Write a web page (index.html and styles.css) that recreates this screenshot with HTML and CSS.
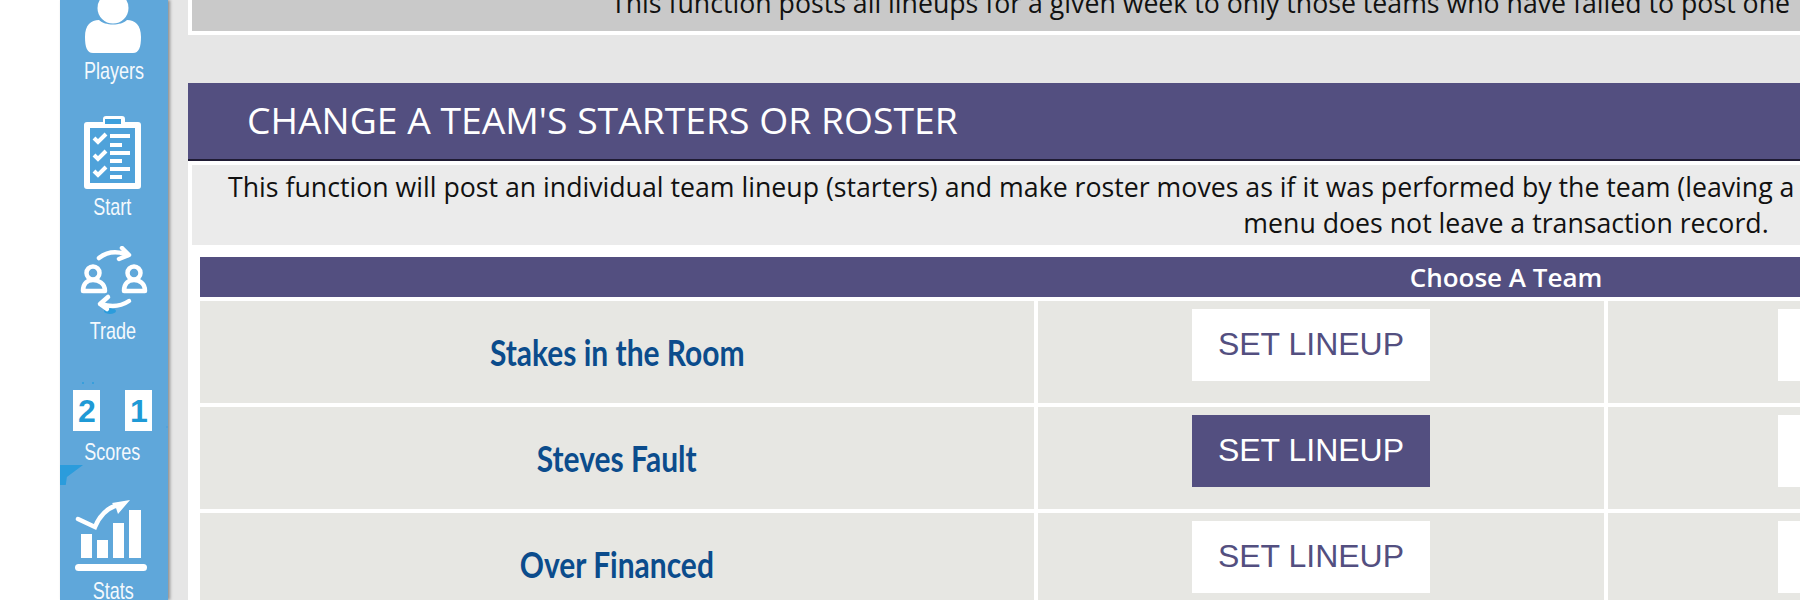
FILE: index.html
```html
<!DOCTYPE html>
<html lang="en">

<head>
    <meta charset="UTF-8">
    <meta name="viewport" content="width=device-width, initial-scale=1.0">
    <title>Commissioner Functions</title>
    <link rel="stylesheet" href="styles.css">
</head>

<body>
    <div class="layout">
        <nav class="sidebar">
            <a class="nav-item nav-players" href="#">
                <svg class="nav-icon" width="108" height="62" viewBox="0 0 108 62">
                    <circle cx="53" cy="15" r="15.5" fill="#fff" />
                    <path d="M25 44 C25 32 31 27 39 27 C45 33 61 33 67 27 C75 27 81 32 81 44 C81 54 79 60 73 60 L33 60 C27 60 25 54 25 44 Z" fill="#fff" />
                </svg>
                <span>Players</span>
            </a>
            <a class="nav-item nav-start" href="#">
                <svg class="nav-icon" width="108" height="73" viewBox="0 0 108 73">
                    <path d="M43 3 Q43 0 46 0 L62 0 Q65 0 65 3 L65 6 L78 6 Q81 6 81 9 L81 70 Q81 73 78 73 L27 73 Q24 73 24 70 L24 9 Q24 6 27 6 L43 6 Z" fill="#fff" />
                    <rect x="30" y="12" width="45" height="55" fill="#4fa2da" />
                    <rect x="45" y="3" width="16" height="5" fill="#3ea0dc" />
                    <g fill="none" stroke="#fff" stroke-width="4">
                        <path d="M34 22 L38 26 L46 18" />
                        <path d="M34 39 L38 43 L46 35" />
                        <path d="M34 55 L38 59 L46 51" />
                    </g>
                    <g fill="#fff">
                        <rect x="50" y="18" width="20" height="4" />
                        <rect x="50" y="27" width="12" height="4" />
                        <rect x="50" y="35" width="20" height="4" />
                        <rect x="50" y="43" width="12" height="4" />
                        <rect x="50" y="51" width="20" height="4" />
                        <rect x="50" y="59" width="12" height="4" />
                    </g>
                </svg>
                <span>Start</span>
            </a>
            <a class="nav-item nav-trade" href="#">
                <svg class="nav-icon" width="108" height="70" viewBox="0 0 108 70">
                    <ellipse cx="50" cy="65" rx="6" ry="3" fill="#2b9cdc" />
                    <g fill="none" stroke="#fff" stroke-width="4.5" stroke-linecap="round" stroke-linejoin="round">
                        <path d="M39 12 C48 5 58 5 68 9" />
                        <path d="M62 2 L69 9 L59 13" />
                        <path d="M69 55 C60 61 50 61 41 58" />
                        <path d="M48 51 L40 58 L47 63" />
                        <circle cx="33" cy="27" r="6.5" />
                        <path d="M23 45 C23 37 28 34 33 34 C38 34 45 37 45 45 Z" />
                        <circle cx="74" cy="27" r="6.5" />
                        <path d="M64 45 C64 37 69 34 74 34 C79 34 85 37 85 45 Z" />
                    </g>
                </svg>
                <span>Trade</span>
            </a>
            <a class="nav-item nav-scores" href="#">
                <svg class="nav-icon" width="108" height="49" viewBox="0 -8 108 49">
                    <circle cx="23" cy="-7" r="1" fill="#2b9cdc" />
                    <circle cx="33" cy="-7" r="1" fill="#2b9cdc" />
                    <circle cx="107" cy="37" r="1" fill="#4fa2da" />
                    <rect x="13" y="0" width="27" height="41" fill="#fff" />
                    <rect x="65" y="0" width="27" height="41" fill="#fff" />
                    <text class="score-digit" x="27" y="32">2</text>
                    <text class="score-digit" x="79" y="32">1</text>
                </svg>
                <span>Scores</span>
            </a>
            <a class="nav-item nav-stats" href="#">
                <svg class="nav-icon" width="108" height="72" viewBox="0 0 108 72">
                    <g fill="#fff">
                        <rect x="21" y="35" width="11" height="24" />
                        <rect x="37" y="41" width="11" height="18" />
                        <rect x="53" y="24" width="11" height="35" />
                        <rect x="69" y="11" width="12" height="48" />
                        <rect x="15" y="65" width="72" height="7" rx="3.5" />
                        <path d="M52 4 L70 1 L58 15 L56 9 Z" />
                    </g>
                    <path d="M18 20 L35 28 C39 18 47 9 58 6" fill="none" stroke="#fff" stroke-width="4.5" stroke-linecap="round" />
                </svg>
                <span>Stats</span>
            </a>
            <span class="sidebar-chip"></span>
        </nav>

        <main class="content">
            <section class="panel-top">
                <p class="panel-top-text">This function posts all lineups for a given week to only those teams who have failed to post one</p>
            </section>

            <section class="panel">
                <h2 class="panel-title">CHANGE A TEAM'S STARTERS OR ROSTER</h2>
                <div class="panel-desc">
                    <p class="desc-first">This function will post an individual team lineup (starters) and make roster moves as if it was performed by the team (leaving a</p>
                    <p class="desc-last">menu does not leave a transaction record.</p>
                </div>

                <div class="teams">
                    <div class="teams-head">Choose A Team</div>

                    <div class="team-row">
                        <div class="team-name"><span>Stakes in the Room</span></div>
                        <div class="team-cell"><a class="action-button" href="#">SET LINEUP</a></div>
                        <div class="team-cell team-cell-last"><a class="action-button" href="#"></a></div>
                    </div>
                    <div class="team-row">
                        <div class="team-name"><span>Steves Fault</span></div>
                        <div class="team-cell"><a class="action-button action-button-hover" href="#">SET LINEUP</a></div>
                        <div class="team-cell team-cell-last"><a class="action-button" href="#"></a></div>
                    </div>
                    <div class="team-row">
                        <div class="team-name"><span>Over Financed</span></div>
                        <div class="team-cell"><a class="action-button" href="#">SET LINEUP</a></div>
                        <div class="team-cell team-cell-last"><a class="action-button" href="#"></a></div>
                    </div>
                </div>
            </section>
        </main>
    </div>
</body>

</html>
```

FILE: styles.css
```css
* {
    box-sizing: border-box;
    margin: 0;
    padding: 0;
}

html,
body {
    height: 100%;
    overflow: hidden;
}

body {
    font-family: "Open Sans", "Liberation Sans", sans-serif;
    background-color: #fff;
}

a {
    text-decoration: none;
}

.layout {
    display: flex;
    width: 2824px;
    height: 600px;
    padding-left: 60px;
}

/* sidebar */
.sidebar {
    position: relative;
    flex: 0 0 108px;
    height: 600px;
    overflow: hidden;
    display: flex;
    flex-direction: column;
    align-items: center;
    background-color: #5fa7da;
    box-shadow: 2px 0 3px #8f8f8f;
    z-index: 1;
}

.nav-item {
    display: flex;
    flex-direction: column;
    align-items: center;
    flex-shrink: 0;
    color: #f4f9fd;
    font-family: "Liberation Sans", sans-serif;
    font-size: 24px;
    line-height: 24px;
}

.nav-item span {
    display: block;
    transform: scaleX(0.75);
}

.nav-icon {
    display: block;
    flex-shrink: 0;
}

.nav-players {
    margin-top: -7px;
}

.nav-players span {
    margin-top: 4px;
}

.nav-start {
    margin-top: 33px;
}

.nav-start span {
    margin: 6px 4px 0 0;
}

.nav-trade {
    margin-top: 27px;
}

.nav-trade span {
    margin: 3px 2px 0 0;
}

.nav-scores {
    margin-top: 39px;
}

.nav-scores span {
    margin: 9px 4px 0 0;
}

.nav-stats {
    margin-top: 35px;
}

.nav-stats span {
    margin: 8px 2px 0 0;
}

.score-digit {
    font-family: "Liberation Sans", sans-serif;
    font-size: 32px;
    font-weight: 700;
    fill: #1f9ad6;
    text-anchor: middle;
}

.sidebar-chip {
    position: absolute;
    left: 0;
    top: 465px;
    width: 23px;
    height: 20px;
    background-color: #2b9cdc;
    clip-path: polygon(0 0, 100% 0, 30% 60%, 25% 100%, 0 100%);
}

/* content */
.content {
    flex: 1;
    padding-left: 20px;
    background-color: #e6e6e6;
}

.panel-top {
    height: 35px;
    padding: 0 4px 4px;
    background-color: #fff;
}

.panel-top-text {
    height: 31px;
    overflow: hidden;
    padding-left: 419px;
    background-color: #c9c9c9;
    font-size: 26.7px;
    line-height: 5px;
    color: #111;
    white-space: nowrap;
}

.panel {
    margin-top: 48px;
    background-color: #fff;
}

.panel-title {
    height: 78px;
    padding-left: 59px;
    border-bottom: 2px solid #1f1b33;
    background-color: #534f80;
    color: #fff;
    font-size: 37.3px;
    font-weight: 400;
    line-height: 74px;
}

.panel-desc {
    margin: 4px 4px 12px;
    height: 80px;
    padding-top: 4px;
    background-color: #ebebeb;
    font-size: 26.7px;
    line-height: 36px;
    color: #111;
}

.desc-first {
    padding-left: 36px;
    white-space: nowrap;
}

.desc-last {
    text-align: center;
}

.teams {
    padding: 0 12px;
}

.teams-head {
    height: 40px;
    background-color: #534f80;
    color: #fff;
    font-size: 26px;
    font-weight: 600;
    line-height: 41px;
    text-align: center;
}

.team-row {
    display: grid;
    grid-template-columns: 834px 566px 1fr;
    gap: 4px;
    margin-top: 4px;
}

.team-row > div {
    height: 102px;
    background-color: #e7e7e3;
}

.team-name {
    padding-top: 31px;
    color: #0b4c8c;
    font-family: Lato, "Open Sans", sans-serif;
    font-size: 37px;
    font-weight: 700;
    line-height: 40px;
    text-align: center;
}

.team-name span {
    display: inline-block;
    transform: scaleX(0.81);
}

.team-cell {
    padding: 8px 0 0 154px;
}

.team-cell-last {
    padding-left: 170px;
}

.action-button {
    display: block;
    width: 238px;
    height: 72px;
    background-color: #fff;
    color: #534f80;
    font-family: "Liberation Sans", Arial, sans-serif;
    font-size: 32px;
    line-height: 70px;
    text-align: center;
}

.action-button-hover {
    background-color: #534f80;
    color: #fff;
}
```
